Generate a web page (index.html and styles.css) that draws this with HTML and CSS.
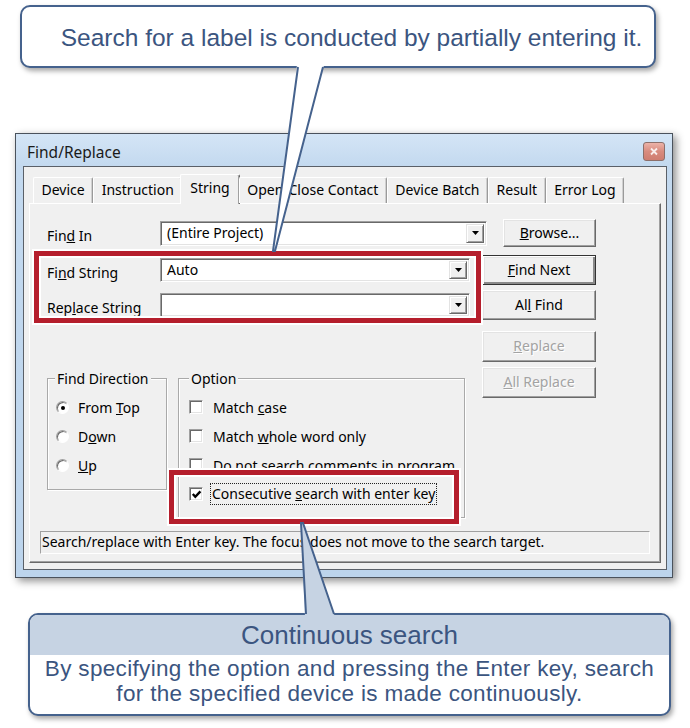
FILE: index.html
```html
<!DOCTYPE html>
<html>
<head>
<meta charset="utf-8">
<link rel="stylesheet" href="styles.css">
</head>
<body>
<div class="page">
  <div class="callout-top">Search for a label is conducted by partially entering it.</div>

  <div class="window">
    <div class="titlebar">
      <span class="title">Find/Replace</span>
      <span class="close-btn"><svg width="10" height="9" viewBox="0 0 10 9"><path d="M2 1.5 L8 7.5 M8 1.5 L2 7.5" stroke="#fff" stroke-width="1.8" opacity="0.85"/></svg></span>
    </div>
    <div class="client">
      <div class="tabs">
        <div class="tab">Device</div>
        <div class="tab">Instruction</div>
        <div class="tab selected">String</div>
        <div class="tab">Open/Close Contact</div>
        <div class="tab">Device Batch</div>
        <div class="tab">Result</div>
        <div class="tab">Error Log</div>
      </div>
      <div class="panel">
        <div class="row row-first">
          <span class="lbl">Fin<u>d</u> In</span>
          <div class="combo combo-wide"><span class="combo-text">(Entire Project)</span><span class="drop"><svg width="7" height="4" viewBox="0 0 7 4"><path d="M0 0 H7 L3.5 4 Z" fill="#000"/></svg></span></div>
          <div class="btn btn-browse"><span><u>B</u>rowse...</span></div>
        </div>
        <div class="find-block">
          <div class="hl-frame hl-find"></div>
          <div class="row row-tall">
            <span class="lbl">Fi<u>n</u>d String</span>
            <div class="combo"><span class="combo-text">Auto</span><span class="drop"><svg width="7" height="4" viewBox="0 0 7 4"><path d="M0 0 H7 L3.5 4 Z" fill="#000"/></svg></span></div>
            <div class="btn btn-main default"><span><u>F</u>ind Next</span></div>
          </div>
          <div class="row row-tall row-gap">
            <span class="lbl">Rep<u>l</u>ace String</span>
            <div class="combo"><span class="combo-text"></span><span class="drop"><svg width="7" height="4" viewBox="0 0 7 4"><path d="M0 0 H7 L3.5 4 Z" fill="#000"/></svg></span></div>
            <div class="btn btn-main"><span>Al<u>l</u> Find</span></div>
          </div>
        </div>
        <div class="lower">
          <div class="groups">
            <fieldset class="group group-dir">
              <legend>Find Direction</legend>
              <div class="opt-row"><span class="radio checked"></span><span>From <u>T</u>op</span></div>
              <div class="opt-row"><span class="radio"></span><span>D<u>o</u>wn</span></div>
              <div class="opt-row"><span class="radio"></span><span><u>U</u>p</span></div>
            </fieldset>
            <fieldset class="group group-opt">
              <legend>Option</legend>
              <div class="opt-row"><span class="check"></span><span>Match <u>c</u>ase</span></div>
              <div class="opt-row"><span class="check"></span><span>Match <u>w</u>hole word only</span></div>
              <div class="opt-row"><span class="check"></span><span>Do not search comments in program</span></div>
              <div class="opt-row opt-focus">
                <div class="hl-frame hl-check"></div>
                <span class="check"><svg width="11" height="11" viewBox="0 0 11 11"><path d="M1.8 5 L4.3 7.8 L9.4 2.4" fill="none" stroke="#000" stroke-width="2.4"/></svg></span>
                <span class="focus-text">Consecutive <u>s</u>earch with enter key</span>
              </div>
            </fieldset>
          </div>
          <div class="btn-col">
            <div class="btn btn-main disabled"><span><u>R</u>eplace</span></div>
            <div class="btn btn-main disabled"><span><u>A</u>ll Replace</span></div>
          </div>
        </div>
        <div class="status">Search/replace with Enter key. The focus does not move to the search target.</div>
      </div>
    </div>
  </div>

  <div class="callout-bottom">
    <div class="cb-head">Continuous search</div>
    <div class="cb-body">
      <div class="cb-line">By specifying the option and pressing the Enter key, search</div>
      <div class="cb-line">for the specified device is made continuously.</div>
    </div>
  </div>

  <svg class="pointers" width="690" height="728" viewBox="0 0 690 728">
    <polygon points="297,65 324,65 275,251 273,251" fill="#fff"/>
    <polyline points="298,67 273,251 275,251 323,67" fill="none" stroke="#45628d" stroke-width="2" stroke-linejoin="miter"/>
    <polygon points="301,523 303,523 335,617 305,617" fill="#c6d3e3"/>
    <polyline points="306,614 301,523 303,523 334,614" fill="none" stroke="#45628d" stroke-width="2"/>
  </svg>
</div>
</body>
</html>
```

FILE: styles.css
```css
* { box-sizing: border-box; }
html, body { margin: 0; padding: 0; }
body {
  width: 690px;
  height: 728px;
  background: #fff;
  overflow: hidden;
  font-family: "Noto Sans", "Open Sans", sans-serif;
}
.page {
  position: relative;
  width: 690px;
  height: 728px;
  padding-top: 5px;
}

/* ---------- callouts ---------- */
.callout-top {
  margin-left: 20px;
  width: 636px;
  height: 63px;
  border: 2px solid #45628d;
  border-radius: 10px;
  background: #fff;
  box-shadow: 2px 3px 5px rgba(0, 0, 0, 0.35);
  display: flex;
  align-items: center;
  justify-content: center;
  padding: 2px 0 0 27px;
  font-family: "Liberation Sans", Arial, sans-serif;
  font-size: 24.5px;
  color: #3b5580;
}
.callout-bottom {
  margin: 35px 0 0 28px;
  width: 643px;
  height: 103px;
  border: 2px solid #45628d;
  border-radius: 10px;
  background: #fff;
  box-shadow: 2px 3px 5px rgba(0, 0, 0, 0.35);
  overflow: hidden;
  font-family: "Liberation Sans", Arial, sans-serif;
  color: #3b5580;
  text-align: center;
}
.cb-head {
  height: 40px;
  background: #c6d3e3;
  font-size: 26px;
  line-height: 40px;
}
.cb-body {
  font-size: 22.5px;
  letter-spacing: 0.33px;
  padding-top: 1px;
}
.cb-line {
  height: 25.2px;
  line-height: 25.2px;
  white-space: nowrap;
}
.pointers {
  position: absolute;
  left: 0;
  top: 0;
  pointer-events: none;
  z-index: 10;
}

/* ---------- window ---------- */
.window {
  margin: 65px 0 0 15px;
  width: 658px;
  height: 445px;
  border: 1px solid #4a525c;
  background: linear-gradient(to bottom, #d4e5f6 0, #c3d9ef 32px, #bcd4ec 100%);
  box-shadow: 3px 3px 8px rgba(0, 0, 0, 0.45);
  display: flex;
  flex-direction: column;
  padding: 0 5px 7px 7px;
  font-size: 14px;
  color: #000;
}
.titlebar {
  height: 32px;
  display: flex;
  justify-content: space-between;
  align-items: flex-start;
  padding-left: 4px;
}
.title {
  font-size: 15.5px;
  line-height: 20px;
  margin-top: 8px;
  color: #1a1a1a;
}
.close-btn {
  margin: 8px 2px 0 0;
  width: 22px;
  height: 19px;
  border: 1px solid #8c6f6a;
  border-radius: 3px;
  background: linear-gradient(to bottom, #ecb2a8, #d88b7e 50%, #cf7d70);
  display: flex;
  align-items: center;
  justify-content: center;
}
.client {
  flex: 1;
  border: 1px solid #5a6068;
  background: #f0f0f0;
  padding: 10px 5px 6px 5px;
  display: flex;
  flex-direction: column;
}

/* ---------- tabs ---------- */
.tabs {
  display: flex;
  height: 26px;
  margin-left: 4px;
  position: relative;
  z-index: 1;
}
.tab {
  height: 26px;
  line-height: 24px;
  padding: 0 7.5px;
  border-top: 1px solid #fff;
  border-left: 1px solid #fff;
  border-right: 1px solid #9a9a9a;
  border-radius: 2px 2px 0 0;
  box-shadow: inset -1px 0 0 #d0d0d0;
  white-space: nowrap;
}
.tab.selected {
  height: 30px;
  margin-top: -3px;
  margin-left: -2px;
  margin-right: -1px;
  padding: 0 9px;
  line-height: 26px;
  background: #f0f0f0;
  border-right-color: #696969;
  box-shadow: inset -1px 0 0 #a0a0a0;
}

/* ---------- panel ---------- */
.panel {
  flex: 1;
  border: 1px solid;
  border-color: #fff #696969 #696969 #fff;
  box-shadow: inset -1px -1px 0 #a0a0a0;
  display: flex;
  flex-direction: column;
  padding-top: 15px;
}
.row {
  display: flex;
  align-items: center;
  padding-left: 17px;
  height: 28px;
}
.row-tall { height: 30px; }
.row-gap { margin-top: 5px; }
.lbl {
  width: 113px;
  padding-top: 4px;
}
.combo {
  position: relative;
  width: 310px;
  height: 24px;
  background: #fff;
  border: 1px solid;
  border-color: #a0a0a0 #fff #fff #a0a0a0;
  box-shadow: inset 1px 1px 0 #696969, inset -1px -1px 0 #e3e3e3;
  display: flex;
  align-items: center;
}
.combo-wide {
  width: 327px;
  height: 25px;
}
.combo-text {
  flex: 1;
  padding-left: 6px;
  padding-bottom: 2px;
}
.drop {
  width: 18px;
  height: calc(100% - 4px);
  margin-right: 2px;
  background: #f0f0f0;
  border: 1px solid;
  border-color: #e3e3e3 #696969 #696969 #e3e3e3;
  box-shadow: inset 1px 1px 0 #fff, inset -1px -1px 0 #a0a0a0;
  display: flex;
  align-items: center;
  justify-content: center;
}
.btn {
  display: flex;
  align-items: center;
  justify-content: center;
  background: #f0f0f0;
  border: 1px solid;
  border-color: #fff #696969 #696969 #fff;
  box-shadow: inset -1px -1px 0 #a0a0a0, inset 1px 1px 0 #e3e3e3;
  padding-bottom: 2px;
}
.btn-browse {
  width: 93px;
  height: 28px;
  margin-left: 16px;
}
.btn-main {
  width: 114px;
  height: 30px;
  margin-left: 12px;
}
.btn.default {
  border: 1px solid #333;
  box-shadow: inset 1px 1px 0 #fff, inset -2px -2px 0 #8a8a8a, inset 2px 2px 0 #e3e3e3;
}
.btn.disabled {
  color: #a3a3a3;
  text-shadow: 1px 1px 0 #fff;
  height: 31px;
}

.find-block {
  position: relative;
  margin-top: 8px;
}
.hl-frame {
  position: absolute;
  border: 5px solid #b51e2c;
  box-shadow: 0 0 0 2px #fff, inset 0 0 0 2px #fff;
  pointer-events: none;
  z-index: 3;
}
.hl-find {
  left: 4px;
  top: -4px;
  width: 447px;
  height: 72px;
}

/* ---------- lower area ---------- */
.lower {
  display: flex;
  margin-top: 11px;
  padding-left: 17px;
}
.groups {
  display: flex;
  align-items: flex-start;
  width: 418px;
  margin-top: 37.5px;
}
.group {
  margin: 0;
  min-width: 0;
  border: 1px solid #a9a9a9;
  box-shadow: inset 1px 1px 0 #fff, 1px 1px 0 #fff;
  padding: 5px 0 0 8px;
}
.group legend {
  line-height: 19px;
  padding: 0 2px;
  margin-left: 0;
  background: #f0f0f0;
}
.group-dir {
  width: 120px;
  padding-bottom: 9.5px;
}
.group-dir legend { margin-left: -1px; }
.group-opt {
  width: 287px;
  margin-left: 11px;
  padding-left: 10px;
  padding-bottom: 8.5px;
}
.group-opt legend { margin-left: 0; }
.opt-row {
  display: flex;
  align-items: center;
  height: 29px;
  white-space: nowrap;
}
.radio {
  position: relative;
  width: 13px;
  height: 13px;
  border-radius: 50%;
  background: #fff;
  border: 1px solid;
  border-color: #a0a0a0 #fff #fff #a0a0a0;
  box-shadow: inset 1px 1px 0 #696969;
  margin-right: 9px;
  flex: none;
}
.radio.checked::after {
  content: "";
  position: absolute;
  left: 4px;
  top: 4px;
  width: 4px;
  height: 4px;
  border-radius: 50%;
  background: #000;
}
.check {
  width: 14px;
  height: 14px;
  background: #fff;
  border: 1px solid;
  border-color: #a0a0a0 #fff #fff #a0a0a0;
  box-shadow: inset 1px 1px 0 #696969, inset -1px -1px 0 #e3e3e3;
  margin-right: 10px;
  flex: none;
  display: flex;
  align-items: center;
  justify-content: center;
}
.opt-focus {
  position: relative;
}
.focus-text {
  outline: 1px dotted #222;
  outline-offset: 0;
  padding: 0 1px;
  margin-left: -2px;
  line-height: 20px;
}
.hl-check {
  left: -20px;
  top: -10px;
  width: 290px;
  height: 54px;
}
.btn-col {
  display: flex;
  flex-direction: column;
  gap: 5px;
  margin-left: 5px;
}

/* ---------- status ---------- */
.status {
  margin: 13px 0 0 10px;
  width: 610px;
  height: 23px;
  border: 1px solid;
  border-color: #a0a0a0 #fff #fff #a0a0a0;
  line-height: 20px;
  padding-left: 1px;
  white-space: nowrap;
  overflow: hidden;
}
```
